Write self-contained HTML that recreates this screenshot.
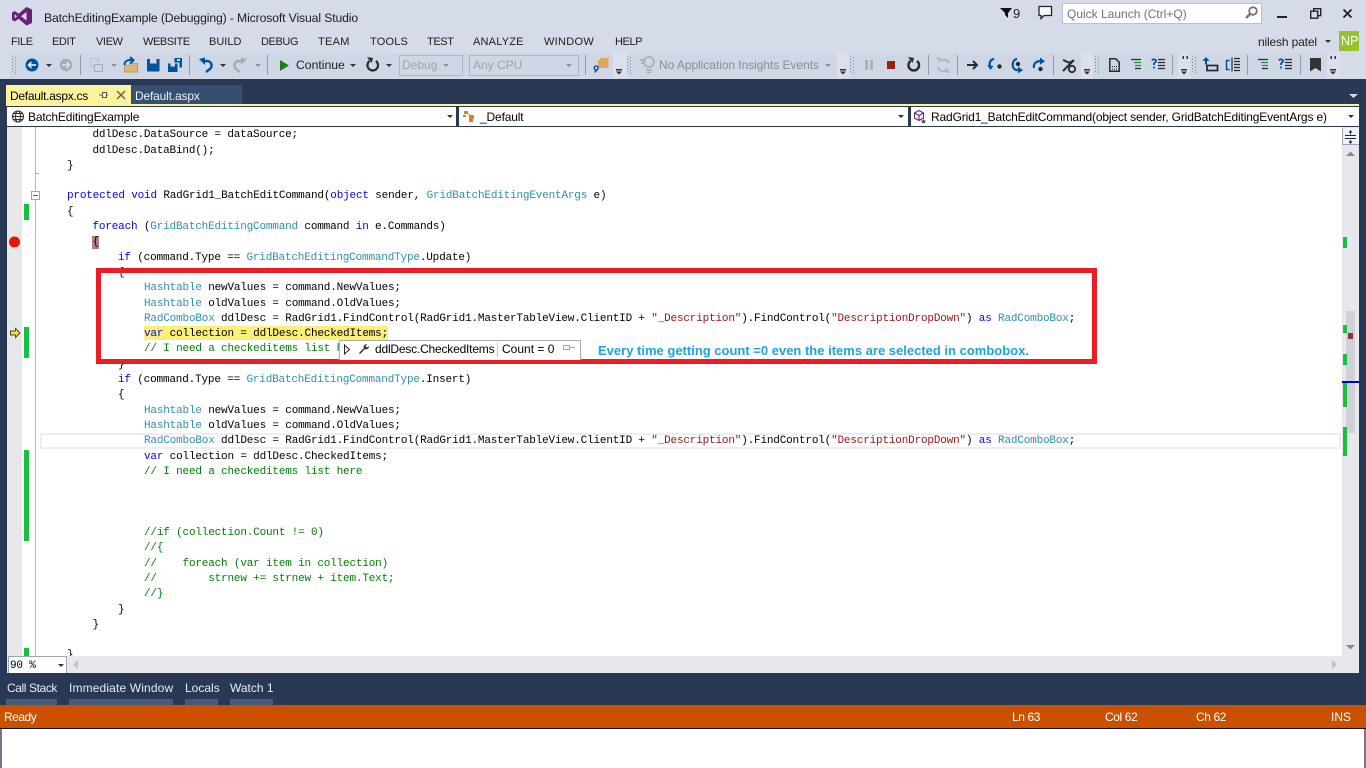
<!DOCTYPE html>
<html><head><meta charset="utf-8"><title>BatchEditingExample (Debugging) - Microsoft Visual Studio</title>
<style>
html,body{margin:0;padding:0;width:1366px;height:768px;overflow:hidden;background:#293955}
body{position:relative;font-family:"Liberation Sans",sans-serif;font-size:12px;color:#1e1e1e}
.b{position:absolute}
.t{position:absolute;white-space:nowrap;line-height:16px;height:16px}
.c{position:absolute;white-space:pre;line-height:15px;height:15px;font-family:"Liberation Mono",monospace;font-size:11px;letter-spacing:-.18px;color:#000;margin-top:1px}
.k{color:#0000ff}.y{color:#2b91af}.s{color:#a31515}.g{color:#008000}
.m{top:34px;font-size:11px;letter-spacing:-.4px;color:#1e1e1e}
.w{color:#fff}
</style></head><body>
<!-- chrome -->
<div class="b" style="left:0;top:0;width:1366px;height:79px;background:#d6dbe9"></div>
<div class="b" style="left:10px;top:53px;width:1330px;height:25px;background:#cfd6e5"></div>
<div class="b" style="left:613px;top:53px;width:14px;height:25px;background:#dce0ec"></div>
<div class="b" style="left:837px;top:53px;width:12px;height:25px;background:#dce0ec"></div>
<div class="b" style="left:1081px;top:53px;width:12px;height:25px;background:#dce0ec"></div>
<div class="b" style="left:1178px;top:53px;width:12px;height:25px;background:#dce0ec"></div>
<div class="b" style="left:1327px;top:53px;width:13px;height:25px;background:#dce0ec"></div>
<div class="t" style="left:44px;top:10px;font-size:12.2px;letter-spacing:-.12px;color:#1e1e1e">BatchEditingExample (Debugging) - Microsoft Visual Studio</div>
<div class="t m" style="left:11px">FILE</div><div class="t m" style="left:52px">EDIT</div><div class="t m" style="left:96px">VIEW</div><div class="t m" style="left:143px">WEBSITE</div><div class="t m" style="left:209px;letter-spacing:0">BUILD</div><div class="t m" style="left:261px">DEBUG</div><div class="t m" style="left:318px;letter-spacing:.3px">TEAM</div><div class="t m" style="left:370px;letter-spacing:.2px">TOOLS</div><div class="t m" style="left:427px">TEST</div><div class="t m" style="left:473px;letter-spacing:.2px">ANALYZE</div><div class="t m" style="left:544px;letter-spacing:.3px">WINDOW</div><div class="t m" style="left:615px">HELP</div>
<div class="t" style="left:1013px;top:6px;font-size:13px">9</div>
<div class="b" style="left:1062px;top:3px;width:198px;height:19px;background:#fff;border:1px solid #b9c0d2"></div>
<div class="t" style="left:1067px;top:6px;font-size:12px;color:#717171">Quick Launch (Ctrl+Q)</div>
<div class="t" style="left:1258px;top:34px;font-size:12px;letter-spacing:-.15px">nilesh patel</div>
<div class="b" style="left:1339px;top:31px;width:20px;height:20px;background:#96c22b"></div>
<div class="t w" style="left:1341px;top:33px;font-size:12.5px">NP</div>
<div class="t" style="left:296px;top:57px;font-size:12.2px;color:#1e1e1e">Continue</div>
<div class="b" style="left:399px;top:55px;width:62px;height:19px;border:1px solid #b0b5c2"></div>
<div class="t" style="left:402px;top:57px;color:#a2a4a5;font-size:12px">Debug</div>
<div class="b" style="left:469px;top:55px;width:108px;height:19px;border:1px solid #b0b5c2"></div>
<div class="t" style="left:473px;top:57px;color:#a2a4a5;font-size:12px">Any CPU</div>
<div class="t" style="left:659px;top:57px;color:#8a8d95;font-size:12px;letter-spacing:-.05px">No Application Insights Events</div>
<!-- tabs -->
<div class="b" style="left:6px;top:85px;width:125px;height:21px;background:#fff29d"></div>
<div class="b" style="left:131px;top:85px;width:111px;height:19px;background:#364e6f"></div>
<div class="t" style="left:10px;top:88px;font-size:12px;letter-spacing:-.27px;color:#000">Default.aspx.cs</div>
<div class="t w" style="left:135px;top:88px;font-size:12px;letter-spacing:-.17px;color:#eef1f6">Default.aspx</div>
<div class="b" style="left:6px;top:104px;width:1353px;height:2px;background:#fff29d"></div>
<div class="b" style="left:7px;top:106px;width:1352px;height:21px;background:#293955"></div>
<div class="b" style="left:7px;top:107px;width:449px;height:19px;background:#fff"></div>
<div class="b" style="left:459px;top:107px;width:449px;height:19px;background:#fff"></div>
<div class="b" style="left:911px;top:107px;width:448px;height:19px;background:#fff"></div>
<div class="t" style="left:28px;top:109px;font-size:12px;letter-spacing:-.15px;color:#000">BatchEditingExample</div>
<div class="t" style="left:480px;top:109px;font-size:12px;letter-spacing:-.15px;color:#000">_Default</div>
<div class="t" style="left:931px;top:109px;font-size:12px;color:#000;letter-spacing:-.15px">RadGrid1_BatchEditCommand(object sender, GridBatchEditingEventArgs e)</div>
<!-- editor -->
<div class="b" style="left:7px;top:127px;width:1352px;height:546px;background:#fff"></div>
<div class="b" style="left:7px;top:127px;width:15px;height:529px;background:#e6e7e8"></div>
<div class="b" style="left:35px;top:127px;width:1px;height:529px;background:#b5b5b5"></div>
<div class="b" style="left:35px;top:173px;width:4px;height:1px;background:#b5b5b5"></div>
<div class="b" style="left:24px;top:204px;width:5px;height:16px;background:#15c13f"></div>
<div class="b" style="left:24px;top:327px;width:5px;height:31px;background:#15c13f"></div>
<div class="b" style="left:24px;top:450px;width:5px;height:91px;background:#15c13f"></div>
<div class="b" style="left:24px;top:648px;width:5px;height:8px;background:#15c13f"></div>
<div class="b" style="left:31px;top:191px;width:7px;height:7px;border:1px solid #a5a5a5;background:#fff"></div>
<div class="b" style="left:33px;top:195px;width:5px;height:1px;background:#666"></div>
<!-- highlights -->
<div class="b" style="left:40px;top:433px;width:1297px;height:12px;border:2px solid #eeeef2"></div>
<div class="b" style="left:144px;top:326px;width:244px;height:14px;background:#fcef79"></div>
<div class="b" style="left:92px;top:236px;width:7px;height:13px;background:#b27e86"></div>
<!-- code -->
<div class="c" style="left:92.5px;top:126.500px">ddlDesc.DataSource = dataSource;</div>
<div class="c" style="left:92.5px;top:143px">ddlDesc.DataBind();</div>
<div class="c" style="left:67px;top:157.600px">}</div>
<div class="c" style="left:67px;top:188.200px"><span class="k">protected</span> <span class="k">void</span> RadGrid1_BatchEditCommand(<span class="k">object</span> sender, <span class="y">GridBatchEditingEventArgs</span> e)</div>
<div class="c" style="left:67px;top:203.500px">{</div>
<div class="c" style="left:92.5px;top:218.800px"><span class="k">foreach</span> (<span class="y">GridBatchEditingCommand</span> command <span class="k">in</span> e.Commands)</div>
<div class="c" style="left:92.5px;top:234.100px">{</div>
<div class="c" style="left:118px;top:250px"><span class="k">if</span> (command.Type == <span class="y">GridBatchEditingCommandType</span>.Update)</div>
<div class="c" style="left:118px;top:264.700px">{</div>
<div class="c" style="left:144px;top:279.500px"><span class="y">Hashtable</span> newValues = command.NewValues;</div>
<div class="c" style="left:144px;top:295.500px"><span class="y">Hashtable</span> oldValues = command.OldValues;</div>
<div class="c" style="left:144px;top:310.600px"><span class="y">RadComboBox</span> ddlDesc = RadGrid1.FindControl(RadGrid1.MasterTableView.ClientID + <span class="s">"_Description"</span>).FindControl(<span class="s">"DescriptionDropDown"</span>) <span class="k">as</span> <span class="y">RadComboBox</span>;</div>
<div class="c" style="left:144px;top:325.900px"><span class="k">var</span> collection = ddlDesc.CheckedItems;</div>
<div class="c g" style="left:144px;top:341.200px">// I need a checkeditems list here</div>
<div class="c" style="left:118px;top:356.500px">}</div>
<div class="c" style="left:118px;top:371.800px"><span class="k">if</span> (command.Type == <span class="y">GridBatchEditingCommandType</span>.Insert)</div>
<div class="c" style="left:118px;top:387.100px">{</div>
<div class="c" style="left:144px;top:403px"><span class="y">Hashtable</span> newValues = command.NewValues;</div>
<div class="c" style="left:144px;top:418px"><span class="y">Hashtable</span> oldValues = command.OldValues;</div>
<div class="c" style="left:144px;top:433px"><span class="y">RadComboBox</span> ddlDesc = RadGrid1.FindControl(RadGrid1.MasterTableView.ClientID + <span class="s">"_Description"</span>).FindControl(<span class="s">"DescriptionDropDown"</span>) <span class="k">as</span> <span class="y">RadComboBox</span>;</div>
<div class="c" style="left:144px;top:449px"><span class="k">var</span> collection = ddlDesc.CheckedItems;</div>
<div class="c g" style="left:144px;top:463.600px">// I need a checkeditems list here</div>
<div class="c g" style="left:144px;top:524.800px">//if (collection.Count != 0)</div>
<div class="c g" style="left:144px;top:540.100px">//{</div>
<div class="c g" style="left:144px;top:556px">//    foreach (var item in collection)</div>
<div class="c g" style="left:144px;top:570.700px">//        strnew += strnew + item.Text;</div>
<div class="c g" style="left:144px;top:586px">//}</div>
<div class="c" style="left:118px;top:602px">}</div>
<div class="c" style="left:92.5px;top:617px">}</div>
<div class="c" style="left:67px;top:647.200px;height:8px;overflow:hidden">}</div>
<!-- scrollbars -->
<div class="b" style="left:1342px;top:127px;width:17px;height:529px;background:#e8e8ec"></div>
<div class="b" style="left:1342px;top:128px;width:16px;height:16px;background:#eef2fb;border-bottom:1px solid #9aa5bf;border-left:1px solid #9aa5bf"></div>
<div class="b" style="left:1346px;top:311px;width:9px;height:122px;background:#d0d1d7"></div>
<div class="b" style="left:1343px;top:237px;width:4px;height:11px;background:#15c13f"></div>
<div class="b" style="left:1343px;top:325px;width:4px;height:8px;background:#15c13f"></div>
<div class="b" style="left:1343px;top:354px;width:4px;height:11px;background:#15c13f"></div>
<div class="b" style="left:1343px;top:382px;width:4px;height:25px;background:#15c13f"></div>
<div class="b" style="left:1343px;top:427px;width:4px;height:29px;background:#15c13f"></div>
<div class="b" style="left:1348px;top:333px;width:5px;height:6px;background:#913538"></div>
<div class="b" style="left:1342px;top:381px;width:17px;height:2px;background:#0000c8"></div>
<div class="b" style="left:7px;top:656px;width:1352px;height:17px;background:#e8e8ec"></div>
<div class="b" style="left:8px;top:656px;width:57px;height:16px;background:#fff;border:1px solid #9aa5bf"></div>
<div class="t" style="left:10px;top:658px;font-family:'Liberation Mono',monospace;font-size:11px;letter-spacing:-.2px;color:#000">90 %</div>
<!-- annotation -->
<div class="b" style="left:96px;top:268px;width:991px;height:86px;border:5px solid #ed1c24"></div>
<div class="b" style="left:339px;top:340px;width:240px;height:19px;background:#fff;border:1px solid #a9abb0;border-bottom:none"></div>
<div class="b" style="left:497px;top:342px;width:1px;height:15px;background:#c9c9c9"></div>
<div class="t" style="left:375px;top:341px;font-size:12px;color:#000;letter-spacing:-.2px">ddlDesc.CheckedItems</div>
<div class="t" style="left:502px;top:341px;font-size:12px;color:#000">Count = 0</div>
<div class="t" style="left:598px;top:343px;font-size:13px;font-weight:bold;color:#1ca3e6">Every time getting count =0 even the items are selected in combobox.</div>
<!-- bottom -->
<div class="b" style="left:0;top:673px;width:1366px;height:32px;background:#293955"></div>
<div class="t" style="left:7px;top:680px;font-size:12px;letter-spacing:-.4px;color:#e6ebf5">Call Stack</div>
<div class="t" style="left:69px;top:680px;font-size:12px;color:#e6ebf5;letter-spacing:.14px">Immediate Window</div>
<div class="t" style="left:185px;top:680px;font-size:12px;color:#e6ebf5">Locals</div>
<div class="t" style="left:230px;top:680px;font-size:12px;color:#e6ebf5">Watch 1</div>
<div class="b" style="left:6px;top:699px;width:51px;height:6px;background:#465a7d"></div>
<div class="b" style="left:69px;top:699px;width:104px;height:6px;background:#465a7d"></div>
<div class="b" style="left:185px;top:699px;width:33px;height:6px;background:#465a7d"></div>
<div class="b" style="left:230px;top:699px;width:43px;height:6px;background:#465a7d"></div>
<div class="b" style="left:0;top:705px;width:1366px;height:23px;background:#ca5100"></div>
<div class="t w" style="left:4px;top:709px;font-size:12px;letter-spacing:-.5px">Ready</div>
<div class="t w" style="left:1012px;top:709px;font-size:12px;letter-spacing:-.4px">Ln 63</div>
<div class="t w" style="left:1105px;top:709px;font-size:12px;letter-spacing:-.4px">Col 62</div>
<div class="t w" style="left:1196px;top:709px;font-size:12px;letter-spacing:-.4px">Ch 62</div>
<div class="t w" style="left:1331px;top:709px;font-size:12px">INS</div>
<div class="b" style="left:0;top:728px;width:1366px;height:40px;background:#fff;border-top:1px solid #111;box-sizing:border-box"></div>
<div class="b" style="left:0;top:729px;width:2px;height:39px;background:#6d7a8a"></div>
<div class="b" style="left:1364px;top:729px;width:2px;height:39px;background:#6d7a8a"></div>
<!-- icons -->
<svg class="b" style="left:0;top:0" width="1366" height="768" viewBox="0 0 1366 768">
<!-- logo -->
<path fill="#68217a" fill-rule="evenodd" d="M26.500 7L32 9.500V23L26.500 25.500 18.500 18.700 15 21.500 12 20V12.500L15 11 18.500 13.800zM26.500 12L21 16.200 26.500 20.500zM14.700 14V18.500L17 16.200z"/>
<!-- title right -->
<path fill="#111" d="M1000 8h12l-4 5v5l-3-3v-2z"/>
<path fill="#fff" stroke="#222" stroke-width="1.300" d="M1039 6.500h12.500v9h-7.500l-3 3v-3h-2z"/>
<circle cx="1253" cy="11" r="3.800" fill="none" stroke="#777" stroke-width="1.800"/><path d="M1250 14l-4 4" stroke="#777" stroke-width="2.500"/>
<rect x="1277" y="16" width="10" height="2" fill="#222"/>
<path fill="none" stroke="#222" stroke-width="1.400" d="M1313.700 11V8.700h7v7H1318M1310.700 11.200h7v7h-7z"/>
<path stroke="#222" stroke-width="1.800" d="M1343.500 9.500l8 8M1351.500 9.500l-8 8"/>
<path fill="#333" d="M1325 40h6l-3 3z"/>
<!-- grippers -->
<g fill="none" stroke="#7f8698" stroke-dasharray="1 2">
<path d="M12.500 56v16M15.500 57.500v16M627.500 56v16M630.500 57.500v16M850.500 56v16M853.500 57.500v16M1095.500 56v16M1098.500 57.500v16M1192.500 56v16M1195.500 57.500v16"/>
</g>
<!-- separators -->
<path stroke="#9299ab" d="M80.500 55v20M189.500 55v20M267.500 55v20M585.500 55v20M928.500 55v20M957.500 55v20M1053.500 55v20M1172.500 55v20M1247.500 55v20M1300.500 55v20"/>
<!-- small arrows -->
<g fill="#333">
<path d="M46 64h6l-3 3zM220 64h6l-3 3zM350 64h6l-3 3zM386 64h6l-3 3z"/>
<path d="M616 69h6v1.500h-6zM616 71.500h6l-3 3zM840 69h6v1.500h-6zM840 71.500h6l-3 3zM1084 69h6v1.500h-6zM1084 71.500h6l-3 3zM1181 69h6v1.500h-6zM1181 71.500h6l-3 3zM1330 69h6v1.500h-6zM1330 71.500h6l-3 3z"/>
<path d="M1182.500 56h1.500v3h-1.500zM1186.500 56h1.500v3h-1.500zM1330.500 56h1.500v3h-1.500zM1334.500 56h1.500v3h-1.500z"/>
</g>
<path fill="#8a8d95" d="M255 64h6l-3 3zM443 64h6l-3 3zM566 64h6l-3 3zM111 64h6l-3 3zM825 64h6l-3 3z"/>
<!-- nav -->
<circle cx="32" cy="65" r="6.500" fill="#00539c"/><path d="M36 65h-7M31.500 62l-3 3 3 3" stroke="#fff" stroke-width="1.500" fill="none"/>
<circle cx="66" cy="65" r="6.200" fill="#a9acb4"/><path d="M62 65h7M66.500 62l3 3-3 3" stroke="#dfe2ea" stroke-width="1.500" fill="none"/>
<path fill="none" stroke="#a8abb3" d="M94.500 64.500h8v7h-8z"/><path fill="none" stroke="#a8abb3" stroke-dasharray="1 1" d="M90.500 58.500h8v4M90.500 58.500v8h4"/>
<path fill="#dcb67a" stroke="#c39a55" d="M124.500 65.500h5l1.500-2h6.500v8.500h-13z"/>
<path stroke="#00539c" stroke-width="2" fill="none" d="M124.500 65c0-4 3-5.500 8-5M130 57l3.500 3.300-3.500 3.300"/>
<path fill="#00539c" fill-rule="evenodd" d="M147 59h12.500v12.500H147zM150 59v4.500h6.500V59z"/>
<path fill="#00539c" fill-rule="evenodd" d="M174.500 58H182v9.500h-2.500V62.500h-5zM177 59v2h3v-2zM168 63.500h9.500V72H168zM170.500 63.500v3h4.500v-3z"/>
<path fill="none" stroke="#00539c" stroke-width="2.500" d="M202 61h5a4.500 4.500 0 0 1 2.500 8.300l-3.500 2.700"/><path fill="#00539c" d="M199 59l6-1.500v7.500z"/>
<path fill="none" stroke="#a9acb4" stroke-width="2.500" d="M244 61h-5a4.500 4.500 0 0 0-2.500 8.300l3.500 2.700"/><path fill="#a9acb4" d="M247 59l-6-1.500v7.500z"/>
<path fill="#1e7c1e" d="M280 60l9 5.500-9 5.500z"/>
<path fill="none" stroke="#2b2b2b" stroke-width="2.200" d="M376 61a5.300 5.300 0 1 1-6.500 0"/><path fill="#2b2b2b" d="M367 57l6 1-1.500 5z"/>
<path fill="#dda85b" d="M598 60h2v-2h8.500v10H598z"/><path fill="none" stroke="#00539c" stroke-width="1.400" d="M597.500 69.500a2 2 0 1 1 .1-.1l-3 3"/>
<!-- lightbulb -->
<circle cx="649" cy="62" r="5" fill="none" stroke="#a7a9ae" stroke-width="1.500"/><path stroke="#a7a9ae" stroke-width="1.500" d="M646 70h6M647 72.500h4M640 60h5M641 63h4"/>
<!-- debug -->
<rect x="865" y="60" width="3" height="10" fill="#aeb1b9"/><rect x="870" y="60" width="3" height="10" fill="#aeb1b9"/>
<rect x="887" y="61" width="8" height="8" fill="#952110"/>
<path fill="none" stroke="#2b2b2b" stroke-width="2.400" d="M917 61a5.300 5.300 0 1 1-6.500 0"/><path fill="#2b2b2b" d="M908 57l6 1-1.500 5z"/>
<path fill="none" stroke="#b4b7bf" stroke-width="2.200" d="M949 63a5 5 0 0 0-8-2M938 67a5 5 0 0 0 8 3"/><path fill="#b4b7bf" d="M936 57l5 1-1.500 5z"/><path fill="#b4b7bf" d="M950 73l-5-1 1.500-5z"/>
<path fill="none" stroke="#2b2b2b" stroke-width="2" d="M967 65h10M973 61l4 4-4 4"/>
<path fill="none" stroke="#00539c" stroke-width="2.200" d="M994 59c-4 .5-5 4-4 8"/><path fill="#00539c" d="M987 65l3.500 5 3-4z"/><circle cx="999.500" cy="66.500" r="2.200" fill="#2b2b2b"/>
<path fill="none" stroke="#00539c" stroke-width="2.200" d="M1017 59c-5 .5-6 9-1 11h3"/><path fill="#00539c" d="M1018 66.500l5 3.800-5 3z"/><circle cx="1018" cy="64" r="2.200" fill="#2b2b2b"/>
<path fill="none" stroke="#00539c" stroke-width="2.200" d="M1034 68c-1-5 3-7 7-7"/><path fill="#00539c" d="M1040 57.500l5 3.800-5 3.500z"/><circle cx="1040.500" cy="69" r="2.200" fill="#2b2b2b"/>
<path fill="none" stroke="#2b2b2b" stroke-width="2" d="M1063 60.500c2-1 3.500 2 6 2s3-1 4-2M1063 71l11-11"/><circle cx="1072" cy="69" r="3.200" fill="none" stroke="#2b2b2b" stroke-width="1.800"/>
<path fill="none" stroke="#2b2b2b" stroke-width="1.500" d="M1109.800 58.800h6l3.400 3.400v9h-9.400z"/><path stroke="#2b2b2b" stroke-dasharray="1 1" d="M1112 66.500h5M1112 69h5"/>
<path stroke="#2b2b2b" stroke-width="1.200" d="M1131 59.500h10M1135 68.500h6"/><path stroke="#159a3c" stroke-width="1.200" d="M1134 62.500h7M1135 65.500h6"/>
<g stroke="#2b2b2b" stroke-width="1.200"><path d="M1158 59.500h7M1158 62.500h7M1158 65.500h7M1158 68.500h7"/></g>
<path fill="none" stroke="#00539c" stroke-width="1.700" d="M1152 60.500c1-2 5-1 4 1l-2 2v1.500M1154 66.500v2"/>
<path fill="none" stroke="#2b2b2b" stroke-width="1.800" d="M1207 65.500h10.500v5H1207z"/><path fill="#00539c" d="M1206 57l3.500 4h-2.500v3.500h-2V61h-2.500z"/>
<path fill="none" stroke="#00539c" stroke-width="1.500" d="M1229.500 60.500h-3v9h3"/><path stroke="#2b2b2b" stroke-width="1.200" d="M1232 57.500v14M1234 58.500h6M1234 61.500h6M1234 64.500h6M1234 67.500h6M1234 70.500h6"/>
<path stroke="#2b2b2b" stroke-width="1.200" d="M1258 59.500h10M1262 68.500h6"/><path stroke="#159a3c" stroke-width="1.200" d="M1261 62.500h7M1262 65.500h6"/>
<g stroke="#2b2b2b" stroke-width="1.200"><path d="M1285 59.500h7M1285 62.500h7M1285 65.500h7M1285 68.500h7"/></g>
<path fill="none" stroke="#00539c" stroke-width="1.700" d="M1279 60.500c1-2 5-1 4 1l-2 2v1.500M1281 66.500v2"/>
<path fill="#333" d="M1310 58h11v13.500l-5.500-3.500-5.500 3.500z"/>
<!-- tab -->
<path stroke="#555" fill="none" d="M99 95h3M102.500 92.500v5h4v-5zM106.500 95h1.500"/>
<path stroke="#5e5e5e" stroke-width="1.300" d="M117 91l8 8M125 91l-8 8"/>
<path fill="#d7dbe6" d="M1349 94h9l-4.500 4z"/>
<!-- nav bar icons -->
<circle cx="18" cy="116.500" r="5.500" fill="none" stroke="#333" stroke-width="1.100"/><ellipse cx="18" cy="116.500" rx="2.500" ry="5.500" fill="none" stroke="#333"/><path stroke="#333" d="M12.500 116.500h11M13.500 113.500h9M13.500 119.500h9"/>
<path fill="#c68a2e" d="M464 111h4v3h-4zM469 115h5v4h-5zM463 115l3 0v2h-3zM469 119h4v3h-4z"/><path stroke="#c68a2e" fill="none" d="M467 113l4 3M471 119v2"/>
<path fill="none" stroke="#68217a" stroke-width="1.100" d="M919 110.500l4.500 2.500v5l-4.500 2.500-4.500-2.500v-5zM914.500 113l4.500 2.500 4.500-2.500M919 115.500v5"/>
<path fill="#444" d="M923.500 119l.9 1.600 1.700.2-1.300 1.100.4 1.600-1.700-.9-1.700.9.4-1.600-1.300-1.100 1.700-.2z"/>
<path fill="#333" d="M447 115h6l-3 3zM898 115h6l-3 3zM1348 115h6l-3 3z"/>
<!-- margin -->
<circle cx="14.500" cy="242" r="5.500" fill="#e51400"/>
<path fill="#ffdb4d" stroke="#5a4a10" d="M10.500 331h5v-2.500l4.500 4.500-4.500 4.500V335h-5z"/>
<!-- splitter / scroll arrows -->
<path fill="none" stroke="#222" d="M1345 135.500h11M1345 138.500h11"/><path fill="#222" d="M1350.500 130l2 2.500h-4zM1350.500 144l2-2.500h-4z"/><path stroke="#222" d="M1350.500 132v2.500M1350.500 140v2"/>
<path fill="#868999" d="M1346 156l4.500-4.500 4.500 4.500z"/>
<path fill="#868999" d="M1346 645l4.500 4.500 4.500-4.500z"/>
<path fill="#c2c3c9" d="M78 660v9l-5-4.500zM1332 660v9l5-4.500z"/>
<path fill="#333" d="M58 664h6l-3 3z"/>
<!-- tooltip icons -->
<path fill="none" stroke="#222" d="M344.500 345l5 4.500-5 4.500z"/>
<path fill="#333" d="M359 353l5-5c-1-2 .5-4 3-4l-1.500 2 1.500 1.500 2-1.500c0 2.500-2 4-4 3l-5 5z"/>
<path fill="#fff" stroke="#a4a6aa" d="M563.500 345.500h6v4h-6z"/><path stroke="#a4a6aa" d="M570 347.500h5"/>
</svg>
</body></html>
